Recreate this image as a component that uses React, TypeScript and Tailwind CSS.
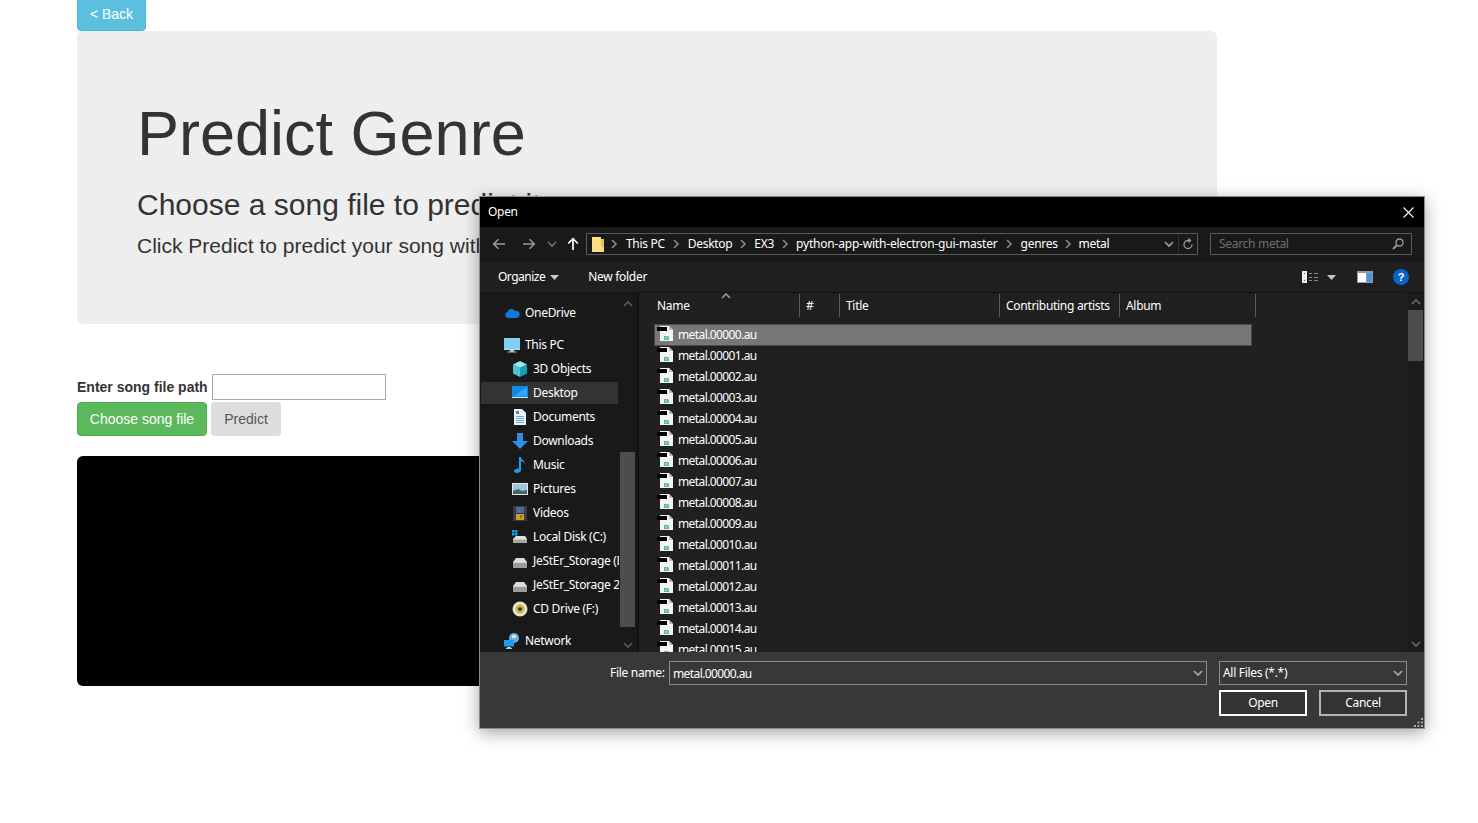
import type { ReactNode } from 'react';

const FILES = [
  '00000', '00001', '00002', '00003', '00004', '00005', '00006', '00007',
  '00008', '00009', '00010', '00011', '00012', '00013', '00014', '00015',
];

function FileIcon() {
  return (
    <svg width="16" height="16" viewBox="0 0 16 16" className="-mt-[2px] shrink-0">
      <path d="M3 0h9l4 4v11H3z" fill="#f4f4f4" />
      <path d="M12 0l4 4h-4z" fill="#bdbdbd" />
      <rect x="0" y="1" width="10" height="4" fill="#000" />
      <path d="M7 10h4l1 1v3H7z" fill="#57b8a8" />
      <path d="M8.500 11.500h2v1h-2z" fill="#d8f0ea" />
    </svg>
  );
}

function FolderIcon() {
  return (
    <svg width="14" height="16" viewBox="0 0 14 16">
      <path d="M1 1h9v15H1z" fill="#fcdf85" />
      <path d="M10 3h3v13h-3z" fill="#e8c25a" />
      <path d="M10 11h3v5h-3z" fill="#f9d777" />
    </svg>
  );
}

function Chevron({ dir = 'right', color = '#8a8a8a' }: { dir?: 'right' | 'up' | 'down'; color?: string }) {
  const d = dir === 'right' ? 'M3 1l4 4-4 4' : dir === 'up' ? 'M1 7l4-4 4 4' : 'M1 3l4 4 4-4';
  return (
    <svg width="10" height="10" viewBox="0 0 10 10" className="shrink-0">
      <path d={d} fill="none" stroke={color} strokeWidth="1.6" />
    </svg>
  );
}

function Arrow({ flip, color }: { flip?: boolean; color: string }) {
  return (
    <svg width="14" height="12" viewBox="0 0 14 12" className={flip ? 'rotate-180' : ''}>
      <path d="M13 6H2M6.5 1.2L1.7 6l4.8 4.8" fill="none" stroke={color} strokeWidth="1.6" />
    </svg>
  );
}

function Caret() {
  return (
    <svg width="9" height="5" viewBox="0 0 9 5">
      <path d="M0 0h9L4.5 5z" fill="#c8c8c8" />
    </svg>
  );
}

const NAV_ICONS: Record<string, ReactNode> = {
  onedrive: (
    <svg width="16" height="16" viewBox="0 0 16 16">
      <path d="M4 13a3 3 0 0 1-.6-5.9A4.2 4.2 0 0 1 11 6a3.4 3.4 0 0 1 4.6 4A3 3 0 0 1 13 13z" fill="#0f78d4" />
    </svg>
  ),
  pc: (
    <svg width="16" height="16" viewBox="0 0 16 16">
      <rect x="0" y="1" width="16" height="11" fill="#7fd0f5" />
      <path d="M0 12h16v1H0z" fill="#cfd8dc" />
      <path d="M6 13h4v1.5H6zM3.5 14.5h9v1h-9z" fill="#b9c4cb" />
    </svg>
  ),
  cube: (
    <svg width="16" height="16" viewBox="0 0 16 16">
      <path d="M8 0l7 3.5L8 7 1 3.5z" fill="#9fe5ec" />
      <path d="M1 3.5L8 7v9l-7-3.5z" fill="#4fc3d3" />
      <path d="M15 3.5L8 7v9l7-3.5z" fill="#12a0bb" />
    </svg>
  ),
  desktop: (
    <svg width="16" height="14" viewBox="0 0 16 14">
      <rect width="16" height="12" fill="#1089e6" />
      <path d="M2 10L13 2h2v8z" fill="#34a6f4" />
      <path d="M0 11h16v1H0z" fill="#d6ecfb" />
    </svg>
  ),
  docs: (
    <svg width="12" height="16" viewBox="0 0 12 16">
      <path d="M0 0h8l4 4v12H0z" fill="#f3f3f3" />
      <path d="M2 2h3v3H2z" fill="#2a8de0" />
      <path d="M2 7h8v1H2zM2 9h8v1H2zM2 11h8v1H2zM2 13h8v1H2z" fill="#5ca6e0" />
    </svg>
  ),
  down: (
    <svg width="16" height="16" viewBox="0 0 16 16">
      <path d="M5 0h6v8h5l-8 8-8-8h5z" fill="#2c8fe3" />
    </svg>
  ),
  music: (
    <svg width="12" height="16" viewBox="0 0 12 16">
      <path d="M5 0h2c0 3 4 3 4 7-1-2-2-2.500-4-3v9c0 2-2 3-4 3s-3-1-3-2 2-3 5-2.500z" fill="#1d9bf0" />
    </svg>
  ),
  pictures: (
    <svg width="16" height="12" viewBox="0 0 16 12">
      <rect width="16" height="12" fill="#e6e6e6" />
      <rect x="1" y="1" width="14" height="10" fill="#9dc3e0" />
      <path d="M1 8l5-2 4 2 5-1v4H1z" fill="#3e6b60" />
    </svg>
  ),
  videos: (
    <svg width="14" height="15" viewBox="0 0 14 15">
      <rect width="14" height="15" fill="#3c3c3c" />
      <rect x="3" y="1" width="8" height="6" fill="#2f6fb5" />
      <rect x="3" y="8" width="8" height="6" fill="#c9a227" />
      <path d="M5 3h2v3H5zM7 9h2v3H7z" fill="#c94c3c" />
    </svg>
  ),
  local: (
    <svg width="16" height="14" viewBox="0 0 16 14">
      <path d="M0 0h2.500v2.500H0zM3 0h2.500v2.500H3zM0 3h2.500v2.500H0zM3 3h2.500v2.500H3z" fill="#19a0e8" />
      <path d="M4 6h9l2 3v4H1V9z" fill="#e2e2e2" />
      <path d="M1 9.500h14V13H1z" fill="#a9a9a9" />
      <path d="M11.500 10.500h2v1h-2z" fill="#33d17a" />
    </svg>
  ),
  drive: (
    <svg width="16" height="10" viewBox="0 0 16 10" className="mt-[3px]">
      <path d="M4 0h8l3 4v6H1V4z" fill="#d9d9d9" />
      <path d="M1 5h14v5H1z" fill="#9c9c9c" />
      <path d="M11.500 7h2v1h-2z" fill="#33d17a" />
    </svg>
  ),
  cd: (
    <svg width="16" height="16" viewBox="0 0 16 16">
      <circle cx="8" cy="8" r="7.500" fill="#e6e3c8" />
      <circle cx="8" cy="8" r="4.500" fill="#c9b44a" />
      <circle cx="8" cy="8" r="1.800" fill="#2a2a2a" />
    </svg>
  ),
  network: (
    <svg width="16" height="16" viewBox="0 0 16 16">
      <circle cx="10" cy="5" r="5" fill="#6fb0dc" />
      <path d="M8 2h4v3H8z" fill="#cfe6f5" />
      <rect x="0" y="7" width="10" height="6.500" fill="#1d9bf0" />
      <path d="M3 14h4v1H3zM2 15h6v1H2z" fill="#b9c4cb" />
    </svg>
  ),
};

const NAV = [
  { label: 'OneDrive', icon: 'onedrive', top: true },
  { label: 'This PC', icon: 'pc', top: true },
  { label: '3D Objects', icon: 'cube' },
  { label: 'Desktop', icon: 'desktop', active: true },
  { label: 'Documents', icon: 'docs' },
  { label: 'Downloads', icon: 'down' },
  { label: 'Music', icon: 'music' },
  { label: 'Pictures', icon: 'pictures' },
  { label: 'Videos', icon: 'videos' },
  { label: 'Local Disk (C:)', icon: 'local' },
  { label: 'JeStEr_Storage (D:)', icon: 'drive' },
  { label: 'JeStEr_Storage 2 (E:)', icon: 'drive' },
  { label: 'CD Drive (F:)', icon: 'cd' },
  { label: 'Network', icon: 'network', top: true },
];

function NavRow({ label, icon, top, active }: { label: string; icon: string; top?: boolean; active?: boolean }) {
  return (
    <div className={`flex h-6 items-center whitespace-nowrap ${top ? 'mt-2 first:mt-0' : ''}`}>
      <div className={`flex h-[22px] w-full items-center ${top ? 'pl-[23px]' : 'pl-[31px]'} ${active ? 'bg-[#333333]' : ''}`}>
        <span className="flex w-[21px] shrink-0 items-center justify-center pr-[5px]">{NAV_ICONS[icon]}</span>
        <span>{label}</span>
      </div>
    </div>
  );
}

function Crumb({ label, className, text = '' }: { label: string; className: string; text?: string }) {
  return (
    <>
      <span className={`flex w-[10px] shrink-0 justify-center ${className}`}>
        <Chevron />
      </span>
      <span className={`whitespace-nowrap ${text}`}>{label}</span>
    </>
  );
}

export default function App() {
  return (
    <div className="relative h-[823px] w-full overflow-hidden bg-white font-['Liberation_Sans',sans-serif] text-[#333333]">
      <div className="ml-[77px] w-[1140px]">
        <button className="-mt-[3px] block h-[34px] w-[69px] rounded-[4px] border border-[#46b8da] bg-[#5bc0de] text-sm text-white">
          &lt; Back
        </button>
        <div className="h-[293px] rounded-[6px] bg-[#eeeeee] pl-[60px] pt-[68px]">
          <h1 className="text-[63px] leading-[69px]">Predict Genre</h1>
          <h3 className="mt-[20px] text-[30px] leading-[33px]">Choose a song file to predict it</h3>
          <p className="mt-[10px] text-[21px] leading-[30px]">Click Predict to predict your song with one click</p>
        </div>
        <div className="mt-[50px] flex items-center">
          <label className="text-sm font-bold">Enter song file path</label>
          <input className="ml-[4px] h-[26px] w-[174px] border border-[#a9a9a9] bg-white" />
        </div>
        <div className="mt-[2px] flex gap-1">
          <button className="h-[34px] w-[130px] rounded-[4px] border border-[#4cae4c] bg-[#5cb85c] text-sm text-white">
            Choose song file
          </button>
          <button className="h-[34px] w-[70px] rounded-[4px] bg-[#dddddd] text-sm text-[#555555]">Predict</button>
        </div>
        <div className="mt-5 h-[230px] rounded-[6px] bg-black" />
      </div>

      {/* the file dialog floats over the page */}
      <div className="absolute left-[479px] top-[196px] flex h-[533px] w-[946px] flex-col border border-[#8c8c8c] bg-[#202020] font-['Noto_Sans',sans-serif] text-xs tracking-[-0.3px] text-white shadow-[0_4px_16px_rgba(0,0,0,0.35)]">
        <div className="flex h-[30px] shrink-0 items-center justify-between bg-black pl-2 pr-[10px]">
          <span>Open</span>
          <svg width="11" height="11" viewBox="0 0 11 11">
            <path d="M.5.500l10 10M10.500.500l-10 10" stroke="#fff" strokeWidth="1.100" />
          </svg>
        </div>

        <div className="flex h-[35px] shrink-0 items-center bg-[#191919] pb-px pl-3 pr-3">
          <Arrow color="#9a9a9a" />
          <span className="ml-4"><Arrow flip color="#9a9a9a" /></span>
          <span className="ml-[11px]"><Chevron dir="down" color="#6f6f6f" /></span>
          <svg width="12" height="14" viewBox="0 0 12 14" className="ml-[10px]">
            <path d="M6 13V2M1.200 6.500L6 1.700l4.800 4.800" fill="none" stroke="#fff" strokeWidth="1.700" />
          </svg>
          <div className="ml-[7px] flex h-[22px] w-[612px] items-center border border-[#5a5a5a] pl-1">
            <FolderIcon />
            <Crumb label="This PC" className="ml-[4px] mr-[7px]" />
            <Crumb label="Desktop" className="ml-[6px] mr-[7px]" />
            <Crumb label="EX3" className="ml-[6px] mr-[6px]" />
            <Crumb label="python-app-with-electron-gui-master" className="ml-[6px] mr-[6px]" text="tracking-[-0.2px]" />
            <Crumb label="genres" className="ml-[6px] mr-[7px]" />
            <Crumb label="metal" className="ml-[5px] mr-[6px]" />
            <div className="ml-auto flex h-full items-center">
              <Chevron dir="down" color="#a0a0a0" />
              <span className="ml-[4px] h-full w-px bg-[#333333]" />
              <svg width="12" height="12" viewBox="0 0 12 12" className="mx-[3px]">
                <path d="M10 6.500A4 4 0 1 1 6 2.500h2M6.500.500L8.500 2.500 6.500 4.500" fill="none" stroke="#9a9a9a" strokeWidth="1.300" />
              </svg>
            </div>
          </div>
          <div className="ml-3 flex h-[22px] w-[202px] items-center justify-between border border-[#5a5a5a] pl-2 pr-[7px] text-[#6e6e6e]">
            <span>Search metal</span>
            <svg width="12" height="12" viewBox="0 0 12 12">
              <circle cx="7.500" cy="4.500" r="3.500" fill="none" stroke="#a0a0a0" strokeWidth="1.300" />
              <path d="M5 7L1 11" stroke="#a0a0a0" strokeWidth="1.800" />
            </svg>
          </div>
        </div>

        <div className="flex h-[30px] shrink-0 items-center bg-[#1f1f1f] pl-[18px] pr-[15px]">
          <span className="tracking-[-0.5px]">Organize</span>
          <span className="ml-[5px]"><Caret /></span>
          <span className="ml-[29px]">New folder</span>
          <svg width="16" height="14" viewBox="0 0 16 14" className="ml-auto">
            <path d="M0 1h5v12H0z" fill="#eee" />
            <path d="M2 3h1v1H2zM2 10h1v1H2z" fill="#555" />
            <path d="M7 3h3v1H7zM12 3h4v1h-4zM7 7h3v1H7zM12 7h4v1h-4zM7 10h3v1H7zM12 10h4v1h-4z" fill="#8a8a8a" />
          </svg>
          <span className="ml-[9px]"><Caret /></span>
          <svg width="16" height="12" viewBox="0 0 16 12" className="ml-[21px]">
            <rect width="16" height="12" fill="#9a9a9a" />
            <path d="M1 2h8v9H1z" fill="#fff" />
            <path d="M10 2h5v9h-5z" fill="#3f9be8" />
          </svg>
          <svg width="16" height="16" viewBox="0 0 16 16" className="ml-5">
            <circle cx="8" cy="8" r="8" fill="#0a63c9" />
            <text x="8" y="12" textAnchor="middle" fontSize="11" fontWeight="700" fill="#fff" fontFamily="Liberation Sans">?</text>
          </svg>
        </div>

        <div className="flex min-h-0 flex-1 border-t border-[#151515]">
          <div className="flex w-[157px] shrink-0 bg-[#191919]">
            <div className="w-[139px] shrink-0 overflow-hidden pt-[8px]">
              <div className="pl-px pr-px">
                {NAV.map((n) => (
                  <NavRow key={n.label} {...n} />
                ))}
              </div>
            </div>
            <div className="ml-px flex w-[15px] shrink-0 flex-col items-center pt-[6px]">
              <Chevron dir="up" color="#5c5c5c" />
              <div className="mt-[143px] h-[175px] w-full bg-[#4d4d4d]" />
              <div className="mt-[13px]"><Chevron dir="down" color="#5c5c5c" /></div>
            </div>
          </div>
          <div className="w-[2px] shrink-0 bg-[#111111]" />

          <div className="relative min-w-0 flex-1 overflow-hidden bg-[#202020]">
            <span className="absolute left-[82px] -top-[2px]"><Chevron dir="up" color="#9a9a9a" /></span>
            <div className="flex h-[24px] items-center pt-[1px]">
              <span className="flex h-full w-[161px] items-center border-r border-[#5a5a5a] pl-[18px]">Name</span>
              <span className="flex h-full w-[40px] items-center border-r border-[#5a5a5a] pl-[6px]">#</span>
              <span className="flex h-full w-[160px] items-center border-r border-[#5a5a5a] pl-[6px]">Title</span>
              <span className="flex h-full w-[120px] items-center border-r border-[#5a5a5a] pl-[6px] whitespace-nowrap">Contributing artists</span>
              <span className="flex h-full w-[136px] items-center border-r border-[#5a5a5a] pl-[6px]">Album</span>
            </div>
            <div className="mt-[7px]">
              {FILES.map((f, i) => (
                <div
                  key={f}
                  className={`ml-[15px] flex w-[598px] items-center pl-[2px] ${i === 0 ? '-mb-px h-[22px] border border-[#4a4a4a] bg-[#777777]' : 'h-[21px] border border-transparent'}`}
                >
                  <FileIcon />
                  <span className="ml-[5px] tracking-[-0.6px]">metal.{f}.au</span>
                </div>
              ))}
            </div>
            <div className="absolute bottom-0 right-0 top-0 flex w-[17px] flex-col items-center bg-[#1c1c1c] pt-1">
              <Chevron dir="up" color="#6a6a6a" />
              <div className="mt-[3px] h-[51px] w-[15px] bg-[#4d4d4d]" />
              <div className="mt-auto mb-[3px]"><Chevron dir="down" color="#6a6a6a" /></div>
            </div>
          </div>
        </div>

        <div className="relative h-[76px] shrink-0 bg-[#383838]">
          <div className="flex items-center pt-[9px]">
            <span className="ml-[130px] w-[54px] whitespace-nowrap text-right">File name:</span>
            <div className="ml-[5px] flex h-6 w-[538px] items-center justify-between border border-[#8c8c8c] pl-[3px] pr-[3px]">
              <span className="pt-px tracking-[-0.6px]">metal.00000.au</span>
              <Chevron dir="down" color="#a8a8a8" />
            </div>
            <div className="ml-3 flex h-6 w-[188px] items-center justify-between border border-[#8c8c8c] pl-[3px] pr-[3px]">
              <span>All Files (*.*)</span>
              <Chevron dir="down" color="#a8a8a8" />
            </div>
          </div>
          <div className="mt-[5px] flex justify-end gap-3 pr-[17px]">
            <button className="h-[26px] w-[88px] border-2 border-white bg-[#333333]">Open</button>
            <button className="h-[26px] w-[88px] border-2 border-[#b4b4b4] bg-[#333333]">Cancel</button>
          </div>
          <svg width="9" height="9" viewBox="0 0 9 9" className="absolute bottom-[1px] right-[1px]">
            <path d="M7 0h2v2H7zM3.500 3.500h2v2h-2zM7 3.500h2v2H7zM0 7h2v2H0zM3.500 7h2v2h-2zM7 7h2v2H7z" fill="#a8a8a8" />
          </svg>
        </div>
      </div>
    </div>
  );
}
